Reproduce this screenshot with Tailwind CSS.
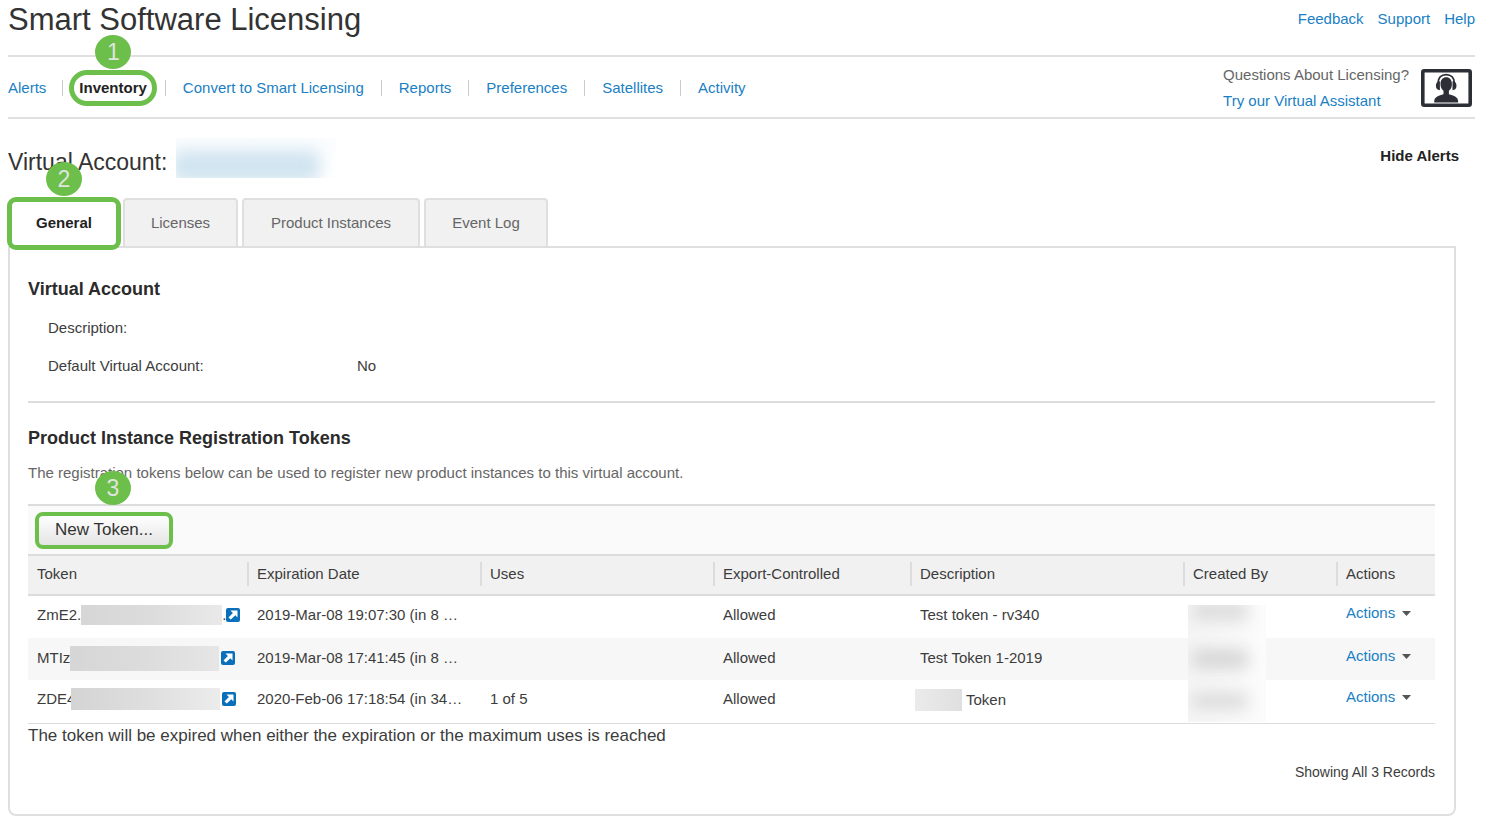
<!DOCTYPE html>
<html lang="en">
<head>
<meta charset="utf-8">
<meta name="viewport" content="width=device-width, initial-scale=1">
<title>Smart Software Licensing</title>
<script src="https://cdn.jsdelivr.net/npm/@tailwindcss/browser@4"></script>
</head>
<body class="bg-white font-['Liberation_Sans',Arial,sans-serif] text-[15px] leading-5 text-[#3c3c3c]">
<div class="pl-2 pr-[25px]">
  <header class="flex h-[55px] items-start justify-between">
    <h1 class="pt-0.5 text-[31px] leading-9 text-[#333]">Smart Software Licensing</h1>
    <nav aria-label="Help links" class="flex gap-3.5 pt-[9px] text-[#1a80c4]">
      <a href="#">Feedback</a>
      <a href="#">Support</a>
      <a href="#">Help</a>
    </nav>
  </header>

  <div class="flex h-16 items-center justify-between border-y-2 border-[#e0e0e0] pt-0.5">
    <nav aria-label="Main" class="flex items-center text-[#1a80c4]">
      <a href="#" class="pr-4">Alerts</a>
      <span class="h-4 w-px bg-[#ccc]"></span>
      <div class="relative">
        <a href="#" aria-current="page" class="ml-1.5 flex h-9 items-center rounded-[18px] border-5 border-[#6cbf4a] px-[5px] font-bold text-[#222]">Inventory</a>
        <span class="absolute -top-[35px] left-8 flex h-[34px] w-9 items-center justify-center rounded-[50%] bg-[#6cbf4a] text-[23px] text-[#e0e4de]">1</span>
      </div>
      <span class="ml-2 h-4 w-px bg-[#ccc]"></span>
      <a href="#" class="px-[17px]">Convert to Smart Licensing</a>
      <span class="h-4 w-px bg-[#ccc]"></span>
      <a href="#" class="px-[17px]">Reports</a>
      <span class="h-4 w-px bg-[#ccc]"></span>
      <a href="#" class="px-[17px]">Preferences</a>
      <span class="h-4 w-px bg-[#ccc]"></span>
      <a href="#" class="px-[17px]">Satellites</a>
      <span class="h-4 w-px bg-[#ccc]"></span>
      <a href="#" class="px-[17px]">Activity</a>
    </nav>
    <div class="flex items-center gap-3 pr-[3px]">
      <div class="leading-[26px]">
        <p class="text-[#666]">Questions About Licensing?</p>
        <a href="#" class="block text-[#1a80c4]">Try our Virtual Assistant</a>
      </div>
      <svg width="51" height="38" viewBox="0 0 51 38" aria-hidden="true">
        <rect x="1.800" y="1.800" width="47.400" height="34.400" rx="1.500" fill="#fff" stroke="#2d2f36" stroke-width="3.600"/>
        <path d="M13.200 33.500c0-5 1.800-6 9.300-8.300v-3.500c-2-1.500-3-3.500-3-6.700 0-4.300 2.300-6.700 5.700-6.700s5.700 2.400 5.700 6.700c0 3.200-1 5.200-3 6.700v3.500c7.500 2.300 9.300 3.300 9.300 8.300z" fill="#2d2f36"/>
        <path d="M17 14.500c0-5.500 3.300-8.900 8.200-8.900s8.200 3.400 8.200 8.900" fill="none" stroke="#2d2f36" stroke-width="1.900"/>
        <path d="M18.900 12.300v8.900c-2.600 0-4-1.800-4-4.400s1.400-4.500 4-4.500zM31.500 12.300v8.900c2.600 0 4-1.800 4-4.400s-1.400-4.500-4-4.500z" fill="#2d2f36"/>
      </svg>
    </div>
  </div>

  <div class="flex h-[78px] items-start justify-between pt-[19px] pr-4">
    <div class="flex">
      <h2 class="pt-2 text-[23px] leading-8 text-[#333]">Virtual Account:</h2>
      <div role="img" aria-label="Hidden account name" class="ml-[9px] h-10 w-[160px] overflow-hidden bg-linear-to-b from-[#fbfdfe] to-white">
        <div class="mt-3 -ml-1 h-8 w-[148px] rounded-lg bg-[#d0e4f0] blur-[8px]"></div>
      </div>
    </div>
    <button type="button" class="pt-2 font-bold text-[#222]">Hide Alerts</button>
  </div>
</div>

<main class="pr-11 pb-[18px] pl-2">
  <div role="tablist" class="relative -mb-0.5 flex h-[51px] items-start gap-1 text-[#666]">
    <div class="-ml-px h-[51px] w-[114px]">
      <button type="button" role="tab" aria-selected="true" class="relative h-[53px] w-full rounded-[9px] border-5 border-[#6cbf4a] bg-white pb-0.5 font-bold text-[#222]">General</button>
      <span class="absolute -top-[35px] left-[38px] flex h-[34px] w-9 items-center justify-center rounded-[50%] bg-[#6cbf4a] text-[23px] text-[#e0e4de]">2</span>
    </div>
    <button type="button" role="tab" class="mt-px -ml-0.5 h-[50px] w-[115px] rounded-t-sm border-2 border-[#dfdfdf] bg-[#f1f1f1]">Licenses</button>
    <button type="button" role="tab" class="mt-px h-[50px] w-[178px] rounded-t-sm border-2 border-[#dfdfdf] bg-[#f1f1f1]">Product Instances</button>
    <button type="button" role="tab" class="mt-px h-[50px] w-[124px] rounded-t-sm border-2 border-[#dfdfdf] bg-[#f1f1f1]">Event Log</button>
  </div>

  <section class="rounded-b-lg border-2 border-[#dfdfdf] pt-[29px] pr-[19px] pb-8 pl-[18px]">
    <h3 class="text-lg leading-6 font-bold text-[#2b2b2b]">Virtual Account</h3>
    <dl class="mt-[17px] grid grid-cols-[309px_1fr] gap-y-[18px] pl-5">
      <dt>Description:</dt><dd></dd>
      <dt>Default Virtual Account:</dt><dd>No</dd>
    </dl>

    <hr class="mt-[25px] border-t-2 border-[#dcdcdc]">

    <h3 class="mt-[23px] text-lg leading-6 font-bold text-[#2b2b2b]">Product Instance Registration Tokens</h3>
    <p class="mt-[13px] text-[#666]">The registration tokens below can be used to register new product instances to this virtual account.</p>

    <div class="relative mt-[21px] flex h-[50px] items-center border-t-2 border-[#dcdcdc] bg-[#fafafa] pl-[7px]">
      <button type="button" class="h-[37px] w-[138px] rounded-lg border-4 border-[#6cbf4a] bg-linear-to-b from-white to-[#e4e4e4] text-[17px] text-[#333]">New Token...</button>
      <span class="absolute -top-[35px] left-[67px] flex h-[34px] w-9 items-center justify-center rounded-[50%] bg-[#6cbf4a] text-[23px] text-[#e0e4de]">3</span>
    </div>

    <div class="relative">
    <table class="w-full table-fixed border-collapse text-left">
      <colgroup>
        <col class="w-[219px]"><col class="w-[233px]"><col class="w-[233px]"><col class="w-[197px]"><col><col class="w-[153px]"><col class="w-[99px]">
      </colgroup>
      <thead>
        <tr class="h-10 border-y-2 border-[#dcdcdc] bg-[#f1f1f1]">
          <th scope="col" class="p-0 pb-0.5 font-normal"><div class="pl-[9px]">Token</div></th>
          <th scope="col" class="p-0 pb-0.5 font-normal"><div class="border-l-2 border-[#dcdcdc] py-0.5 pl-2">Expiration Date</div></th>
          <th scope="col" class="p-0 pb-0.5 font-normal"><div class="border-l-2 border-[#dcdcdc] py-0.5 pl-2">Uses</div></th>
          <th scope="col" class="p-0 pb-0.5 font-normal"><div class="border-l-2 border-[#dcdcdc] py-0.5 pl-2">Export-Controlled</div></th>
          <th scope="col" class="p-0 pb-0.5 font-normal"><div class="border-l-2 border-[#dcdcdc] py-0.5 pl-2">Description</div></th>
          <th scope="col" class="p-0 pb-0.5 font-normal"><div class="border-l-2 border-[#dcdcdc] py-0.5 pl-2">Created By</div></th>
          <th scope="col" class="p-0 pb-0.5 font-normal"><div class="border-l-2 border-[#dcdcdc] py-0.5 pl-2">Actions</div></th>
        </tr>
      </thead>
      <tbody>
        <tr class="h-[43px]">
          <td class="p-0 pb-1 pl-[9px]"><div class="flex items-center">ZmE2.<span class="h-5 w-[141px] flex-none bg-linear-to-r from-[#d6d6d6] via-[#dcdcdc] to-[#e9e9e9]"></span>.<a href="#" aria-label="Open token" class="block"><svg width="14" height="14" viewBox="0 0 14 14" aria-hidden="true"><rect width="14" height="14" rx="2" fill="#0b70bb"/><path d="M4.500 2.500h7v7L9.300 7.300 4.800 11.600 2.500 9.400l4.400-4.500z" fill="#fff"/></svg></a></div></td>
          <td class="p-0 pb-1 pl-2.5">2019-Mar-08 19:07:30 (in 8 …</td>
          <td></td>
          <td class="p-0 pb-1 pl-2.5">Allowed</td>
          <td class="p-0 pb-1 pl-2.5">Test token - rv340</td>
          <td></td>
          <td class="p-0 pb-2 pl-2.5"><button type="button" class="flex items-center gap-[7px] text-[#1a80c4]">Actions<svg width="9" height="5" viewBox="0 0 9 5" aria-hidden="true"><path d="M0 0h9L4.500 5z" fill="#555"/></svg></button></td>
        </tr>
        <tr class="h-[42px] bg-[#f7f7f7]">
          <td class="p-0 pb-0.5 pl-[9px]"><div class="flex items-center">MTIz<span class="h-[25px] w-[149px] flex-none bg-linear-to-r from-[#d6d6d6] via-[#dcdcdc] to-[#e6e6e6]"></span><a href="#" aria-label="Open token" class="ml-0.5 block"><svg width="14" height="14" viewBox="0 0 14 14" aria-hidden="true"><rect width="14" height="14" rx="2" fill="#0b70bb"/><path d="M4.500 2.500h7v7L9.300 7.300 4.800 11.600 2.500 9.400l4.400-4.500z" fill="#fff"/></svg></a></div></td>
          <td class="p-0 pb-0.5 pl-2.5">2019-Mar-08 17:41:45 (in 8 …</td>
          <td></td>
          <td class="p-0 pb-0.5 pl-2.5">Allowed</td>
          <td class="p-0 pb-0.5 pl-2.5">Test Token 1-2019</td>
          <td></td>
          <td class="p-0 pb-1.5 pl-2.5"><button type="button" class="flex items-center gap-[7px] text-[#1a80c4]">Actions<svg width="9" height="5" viewBox="0 0 9 5" aria-hidden="true"><path d="M0 0h9L4.500 5z" fill="#555"/></svg></button></td>
        </tr>
        <tr class="h-[43px] border-b border-[#dcdcdc]">
          <td class="p-0 pb-1 pl-[9px]"><div class="flex items-center">ZDE4<span class="relative -ml-1 h-[22px] w-[149px] flex-none bg-linear-to-r from-[#d4d4d4] via-[#dedede] to-[#ececec]"></span><a href="#" aria-label="Open token" class="ml-0.5 block"><svg width="14" height="14" viewBox="0 0 14 14" aria-hidden="true"><rect width="14" height="14" rx="2" fill="#0b70bb"/><path d="M4.500 2.500h7v7L9.300 7.300 4.800 11.600 2.500 9.400l4.400-4.500z" fill="#fff"/></svg></a></div></td>
          <td class="p-0 pb-1 pl-2.5">2020-Feb-06 17:18:54 (in 34…</td>
          <td class="p-0 pb-1 pl-2.5">1 of 5</td>
          <td class="p-0 pb-1 pl-2.5">Allowed</td>
          <td class="p-0 pb-0.5 pl-[5px]"><div class="flex items-center gap-1"><span class="h-[22px] w-[47px] bg-linear-to-r from-[#ebebeb] to-[#dfdfdf]"></span>Token</div></td>
          <td></td>
          <td class="p-0 pb-2 pl-2.5"><button type="button" class="flex items-center gap-[7px] text-[#1a80c4]">Actions<svg width="9" height="5" viewBox="0 0 9 5" aria-hidden="true"><path d="M0 0h9L4.500 5z" fill="#555"/></svg></button></td>
        </tr>
      </tbody>
    </table>
    <div role="img" aria-label="Hidden user names" class="absolute top-[51px] right-[169px] h-[117px] w-[78px] overflow-hidden bg-linear-to-r from-[#f5f5f5] to-[#fcfcfc]">
      <div class="-mt-1 ml-1 h-5 w-14 rounded-md bg-[#dcdcdc] blur-[8px]"></div>
      <div class="mt-7 ml-1 h-5 w-14 rounded-md bg-[#d6d6d6] blur-[8px]"></div>
      <div class="mt-6 ml-1 h-4 w-14 rounded-md bg-[#dadada] blur-[8px]"></div>
    </div>
    </div>

    <p class="mt-0.5 text-[17px] leading-5">The token will be expired when either the expiration or the maximum uses is reached</p>
    <p class="mt-4 text-right text-sm">Showing All 3 Records</p>
  </section>
</main>
</body>
</html>
